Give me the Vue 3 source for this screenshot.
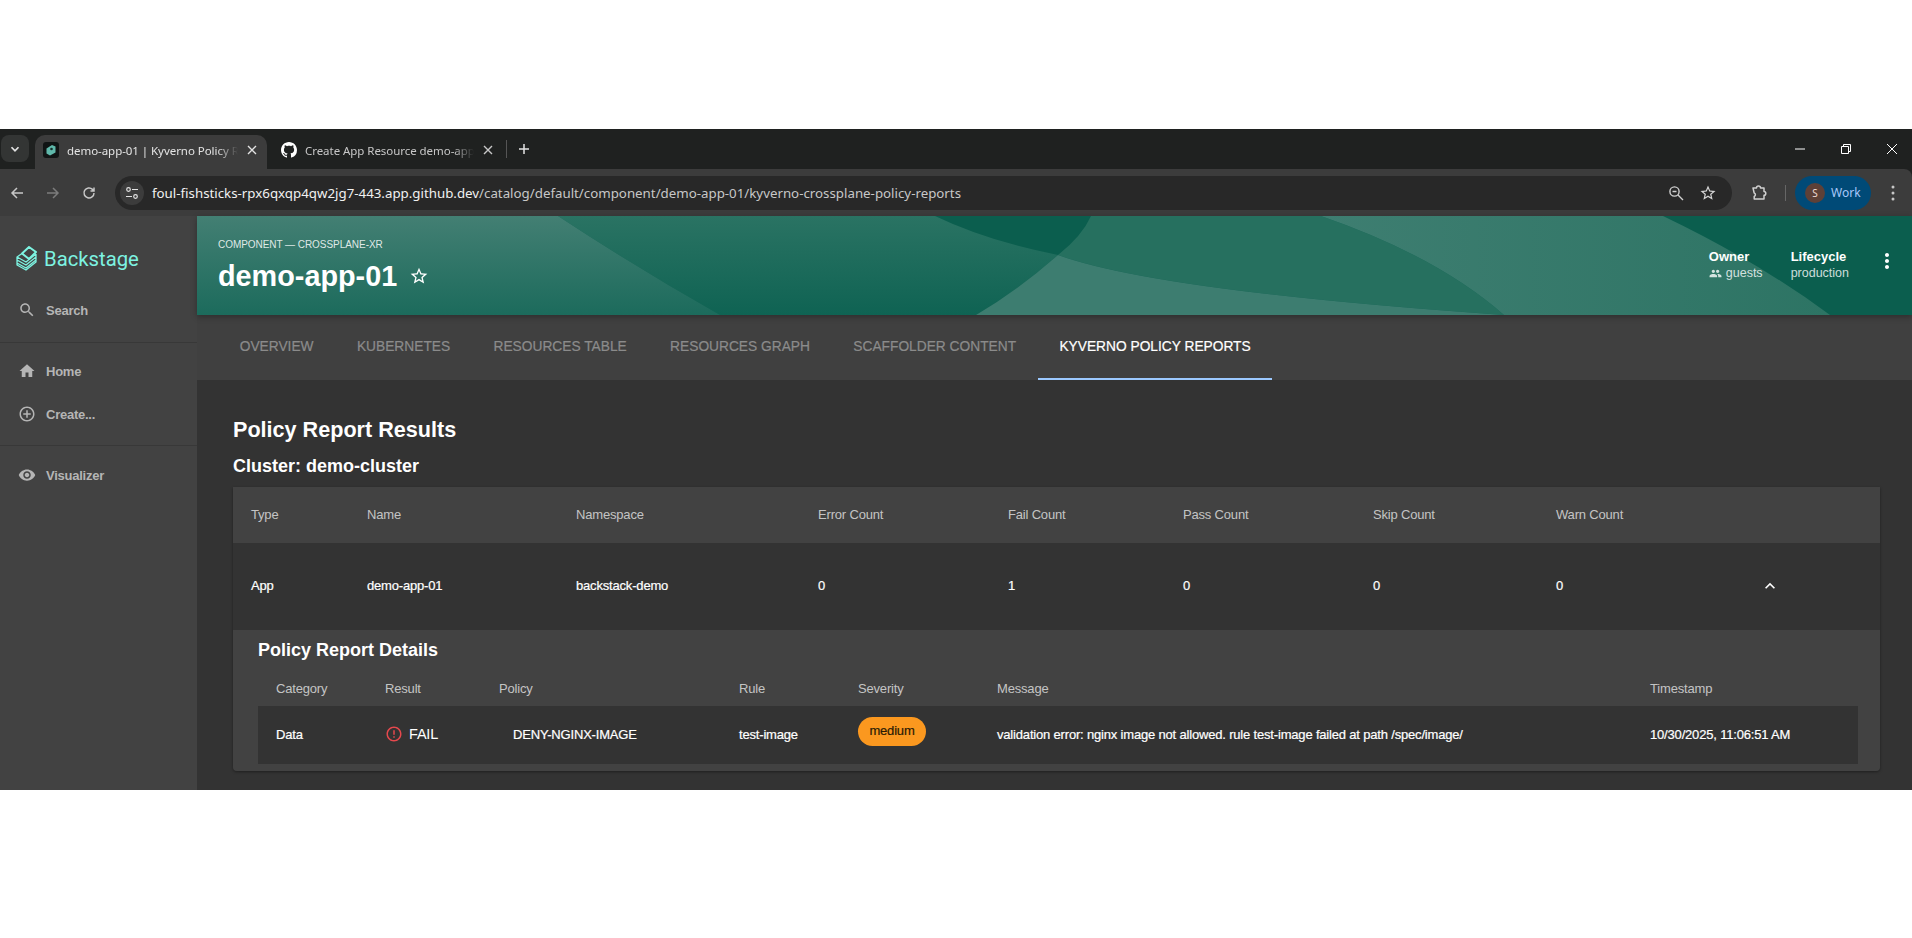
<template>
  <div class="shot">
    <div class="chrome">
      <div class="tabstrip">
        <div class="tab-search">
          <svg width="14" height="14" viewBox="0 0 24 24"><path d="M6 9l6 6 6-6" fill="none" stroke="#e3e3e3" stroke-width="3" /></svg>
        </div>
        <div class="btab active">
          <span class="favicon">
            <svg width="16" height="16" viewBox="0 0 16 16">
              <rect width="16" height="16" rx="3" fill="#101414" />
              <path d="M3.5 6.5L9 3l3.5 1.5v6L7 13.5l-3.5-2z" fill="#5fb8aa" />
              <circle cx="8.5" cy="7" r="1.3" fill="#14302c" />
            </svg>
          </span>
          <span class="btab-title">demo-app-01 | Kyverno Policy R</span>
          <svg class="btab-x" width="10" height="10" viewBox="0 0 10 10"><path d="M1 1l8 8M9 1l-8 8" stroke="#e3e3e3" stroke-width="1.4" /></svg>
        </div>
        <div class="btab">
          <svg class="gh" width="16" height="16" viewBox="0 0 16 16"><path fill="#fff" d="M8 0C3.58 0 0 3.58 0 8c0 3.54 2.29 6.53 5.47 7.59.4.07.55-.17.55-.38 0-.19-.01-.82-.01-1.49-2.01.37-2.53-.49-2.69-.94-.09-.23-.48-.94-.82-1.13-.28-.15-.68-.52-.01-.53.63-.01 1.08.58 1.23.82.72 1.21 1.87.87 2.33.66.07-.52.28-.87.51-1.07-1.78-.2-3.64-.89-3.64-3.95 0-.87.31-1.59.82-2.15-.08-.2-.36-1.02.08-2.12 0 0 .67-.21 2.2.82.64-.18 1.32-.27 2-.27s1.36.09 2 .27c1.53-1.04 2.2-.82 2.2-.82.44 1.1.16 1.92.08 2.12.51.56.82 1.27.82 2.15 0 3.07-1.87 3.75-3.65 3.95.29.25.54.73.54 1.48 0 1.07-.01 1.93-.01 2.2 0 .21.15.46.55.38A8.01 8.01 0 0 0 16 8c0-4.42-3.58-8-8-8z" /></svg>
          <span class="btab-title">Create App Resource demo-app</span>
          <svg class="btab-x" width="10" height="10" viewBox="0 0 10 10"><path d="M1 1l8 8M9 1l-8 8" stroke="#c7c7c7" stroke-width="1.4" /></svg>
        </div>
        <span class="tab-sep"></span>
        <svg class="tab-plus" width="12" height="12" viewBox="0 0 12 12"><path d="M6 1v10M1 6h10" stroke="#e3e3e3" stroke-width="1.5" /></svg>
        <div class="win-btns">
          <svg width="10" height="10" viewBox="0 0 10 10"><path d="M0 5h10" stroke="#fff" stroke-width="1" /></svg>
          <svg width="10" height="10" viewBox="0 0 10 10"><path d="M.5 2.5h7v7h-7zM2.5 2.5V.5h7v7h-2" fill="none" stroke="#fff" stroke-width="1" /></svg>
          <svg width="10" height="10" viewBox="0 0 10 10"><path d="M0 0l10 10M10 0L0 10" stroke="#fff" stroke-width="1" /></svg>
        </div>
      </div>

      <div class="toolbar">
        <div class="nav-btns">
          <svg width="16" height="16" viewBox="0 0 16 16"><path d="M14 8H3M8 3L3 8l5 5" fill="none" stroke="#c7c7c7" stroke-width="1.5" /></svg>
          <svg width="16" height="16" viewBox="0 0 16 16"><path d="M2 8h11M8 3l5 5-5 5" fill="none" stroke="#7c7c7c" stroke-width="1.5" /></svg>
          <svg width="16" height="16" viewBox="0 0 16 16"><path d="M13 8a5 5 0 1 1-1.5-3.6L13 6M13 2.5V6H9.5" fill="none" stroke="#c7c7c7" stroke-width="1.5" /></svg>
        </div>
        <div class="omnibox">
          <span class="tune">
            <svg width="14" height="14" viewBox="0 0 14 14">
              <circle cx="3.5" cy="3.5" r="1.8" fill="none" stroke="#e3e3e3" stroke-width="1.2" />
              <path d="M7 3.5h6M1 10.5h6" stroke="#e3e3e3" stroke-width="1.2" />
              <circle cx="10.5" cy="10.5" r="1.8" fill="none" stroke="#e3e3e3" stroke-width="1.2" />
            </svg>
          </span>
          <span class="url"><b>foul-fishsticks-rpx6qxqp4qw2jg7-443.app.github.dev</b>/catalog/default/component/demo-app-01/kyverno-crossplane-policy-reports</span>
          <svg class="omni-zoom" width="16" height="16" viewBox="0 0 16 16">
            <circle cx="6.5" cy="6.5" r="4.6" fill="none" stroke="#d0d0d0" stroke-width="1.4" />
            <path d="M10 10l5 5M4.5 6.5h4" stroke="#d0d0d0" stroke-width="1.4" />
          </svg>
          <svg class="omni-star" width="18" height="18" viewBox="0 0 24 24"><path fill="#d6d6d6" :d="starPath" /></svg>
        </div>
        <svg class="puzzle" width="18" height="18" viewBox="0 0 18 18"><path d="M3 4h3.5a2 2 0 0 1 4 0H14v3.6a1.8 1.8 0 0 1 0 3.6V15H4.2v-2.6a1.8 1.8 0 0 0 0-3.4z" fill="none" stroke="#d0d0d0" stroke-width="1.5" stroke-linejoin="round" /></svg>
        <span class="bar-sep"></span>
        <div class="profile">
          <span class="avatar">S</span>
          <span>Work</span>
        </div>
        <svg class="chrome-menu" width="4" height="16" viewBox="0 0 4 16"><circle cx="2" cy="2" r="1.5" fill="#c7c7c7" /><circle cx="2" cy="8" r="1.5" fill="#c7c7c7" /><circle cx="2" cy="14" r="1.5" fill="#c7c7c7" /></svg>
      </div>
    </div>

    <div class="page">
      <aside class="sidebar">
        <div class="logo">
          <svg width="22" height="26" viewBox="0 0 22 26" fill="none" stroke="#7df3e1" stroke-width="1.3" stroke-linejoin="round">
            <path d="M6 7.5L13 1l7 5-7 7z" stroke-width="2" />
            <path d="M6 7.5L1 11l9 5 10-8M1 11v3l9 5 10-8V8M1 14v3l9 5 10-8v-3M1 17v2l9 5 10-8v-2" />
          </svg>
          <span>Backstage</span>
        </div>
        <div class="side-item search">
          <svg width="18" height="18" viewBox="0 0 24 24"><path :d="icons.search" /></svg>
          <span>Search</span>
        </div>
        <div class="side-rule"></div>
        <div class="side-item home">
          <svg width="18" height="18" viewBox="0 0 24 24"><path :d="icons.home" /></svg>
          <span>Home</span>
        </div>
        <div class="side-item create">
          <svg width="18" height="18" viewBox="0 0 24 24"><path :d="icons.add" /></svg>
          <span>Create...</span>
        </div>
        <div class="side-rule second"></div>
        <div class="side-item visual">
          <svg width="18" height="18" viewBox="0 0 24 24"><path :d="icons.eye" /></svg>
          <span>Visualizer</span>
        </div>
      </aside>

      <main class="main">
        <header class="hero">
          <svg class="waves" viewBox="0 0 1715 99" preserveAspectRatio="none">
            <defs>
              <linearGradient id="leftFade" x1="0" y1="0" x2="0" y2="1">
                <stop offset="0" stop-color="#437f73" />
                <stop offset="1" stop-color="#1c6b5c" />
              </linearGradient>
              <linearGradient id="midFade" x1="0" y1="0" x2="0" y2="1">
                <stop offset="0" stop-color="#2a7363" />
                <stop offset="1" stop-color="#0f6353" />
              </linearGradient>
              <linearGradient id="rightFade" x1="0" y1="0" x2="1" y2="0">
                <stop offset="0" stop-color="#3e7e71" />
                <stop offset="1" stop-color="#2d7464" />
              </linearGradient>
            </defs>
            <rect width="1715" height="99" fill="#0b5e4e" />
            <path d="M361 0H738Q790 25 861 39Q820 75 779 99H523Q440 52 361 0Z" fill="url(#midFade)" />
            <path d="M0 0H361Q440 52 523 99H0Z" fill="url(#leftFade)" />
            <path d="M894 0H1124Q1240 40 1307 99Q960 75 861 39Q885 20 894 0Z" fill="#26705f" />
            <path d="M861 39Q960 75 1307 99H779Q820 75 861 39Z" fill="#3d7d70" />
            <path d="M1124 0H1466Q1560 45 1633 99H1307Q1240 40 1124 0Z" fill="url(#rightFade)" />
          </svg>
          <div class="hero-title">
            <div class="kicker">COMPONENT — CROSSPLANE-XR</div>
            <div class="title-line">
              <h1>demo-app-01</h1>
              <svg width="20" height="20" viewBox="0 0 24 24"><path fill="#fff" :d="starPath" /></svg>
            </div>
          </div>
          <div class="hero-meta">
            <div class="meta">
              <strong>Owner</strong>
              <span class="meta-val">
                <svg width="13" height="13" viewBox="0 0 24 24"><path :d="icons.group" /></svg>
                guests
              </span>
            </div>
            <div class="meta">
              <strong>Lifecycle</strong>
              <span class="meta-val">production</span>
            </div>
            <svg class="hero-more" width="24" height="24" viewBox="0 0 24 24"><path fill="#fff" :d="icons.more" /></svg>
          </div>
        </header>

        <nav class="tabs">
          <span v-for="t in tabs" :key="t" class="tab" :class="{ current: t === activeTab }">{{ t }}</span>
        </nav>

        <section class="content">
          <h2>Policy Report Results</h2>
          <h3>Cluster: demo-cluster</h3>
          <div class="card">
            <div class="report-grid report-head">
              <span v-for="c in reportCols" :key="c">{{ c }}</span>
            </div>
            <div class="report-grid report-row">
              <span v-for="(v, i) in reportRow" :key="i">{{ v }}</span>
              <svg class="chev" width="20" height="20" viewBox="0 0 24 24"><path fill="#fff" :d="icons.less" /></svg>
            </div>
            <div class="details">
              <h4>Policy Report Details</h4>
              <div class="detail-grid detail-head">
                <span v-for="c in detailCols" :key="c">{{ c }}</span>
              </div>
              <div class="detail-grid detail-row">
                <span>Data</span>
                <span class="result">
                  <svg width="18" height="18" viewBox="0 0 24 24"><path fill="#e5484d" :d="icons.error" /></svg>
                  FAIL
                </span>
                <span class="policy">DENY-NGINX-IMAGE</span>
                <span>test-image</span>
                <span class="sev"><em>medium</em></span>
                <span>validation error: nginx image not allowed. rule test-image failed at path /spec/image/</span>
                <span>10/30/2025, 11:06:51 AM</span>
              </div>
            </div>
          </div>
        </section>
      </main>
    </div>
  </div>
</template>

<script setup>
const starPath = 'M22 9.24l-7.19-.62L12 2 9.19 8.63 2 9.24l5.46 4.73L5.82 21 12 17.27 18.18 21l-1.63-7.03L22 9.24zM12 15.4l-3.76 2.27 1-4.28-3.32-2.88 4.38-.38L12 6.1l1.71 4.04 4.38.38-3.32 2.88 1 4.28L12 15.4z'

const icons = {
  search: 'M15.5 14h-.79l-.28-.27C15.41 12.59 16 11.11 16 9.5 16 5.91 13.09 3 9.5 3S3 5.91 3 9.5 5.91 16 9.5 16c1.61 0 3.09-.59 4.23-1.57l.27.28v.79l5 4.99L20.49 19l-4.99-5zm-6 0C7.01 14 5 11.99 5 9.5S7.01 5 9.5 5 14 7.01 14 9.5 11.99 14 9.5 14z',
  home: 'M10 20v-6h4v6h5v-8h3L12 3 2 12h3v8z',
  add: 'M13 7h-2v4H7v2h4v4h2v-4h4v-2h-4V7zm-1-5C6.48 2 2 6.48 2 12s4.48 10 10 10 10-4.48 10-10S17.52 2 12 2zm0 18c-4.41 0-8-3.59-8-8s3.59-8 8-8 8 3.59 8 8-3.59 8-8 8z',
  eye: 'M12 4.5C7 4.5 2.73 7.61 1 12c1.73 4.39 6 7.5 11 7.5s9.27-3.11 11-7.5c-1.73-4.39-6-7.5-11-7.5zM12 17c-2.76 0-5-2.24-5-5s2.24-5 5-5 5 2.24 5 5-2.24 5-5 5zm0-8c-1.66 0-3 1.34-3 3s1.34 3 3 3 3-1.34 3-3-1.34-3-3-3z',
  group: 'M16 11c1.66 0 2.99-1.34 2.99-3S17.66 5 16 5c-1.66 0-3 1.34-3 3s1.34 3 3 3zm-8 0c1.66 0 2.99-1.34 2.99-3S9.66 5 8 5C6.34 5 5 6.34 5 8s1.34 3 3 3zm0 2c-2.33 0-7 1.17-7 3.5V19h14v-2.5c0-2.33-4.67-3.5-7-3.5zm8 0c-.29 0-.62.02-.97.05 1.16.84 1.97 1.97 1.97 3.45V19h6v-2.5c0-2.33-4.67-3.5-7-3.5z',
  more: 'M12 8c1.1 0 2-.9 2-2s-.9-2-2-2-2 .9-2 2 .9 2 2 2zm0 2c-1.1 0-2 .9-2 2s.9 2 2 2 2-.9 2-2-.9-2-2-2zm0 6c-1.1 0-2 .9-2 2s.9 2 2 2 2-.9 2-2-.9-2-2-2z',
  less: 'M12 8l-6 6 1.41 1.41L12 10.83l4.59 4.58L18 14z',
  error: 'M11 15h2v2h-2zm0-8h2v6h-2zm.99-5C6.47 2 2 6.48 2 12s4.47 10 9.99 10C17.52 22 22 17.52 22 12S17.52 2 11.99 2zM12 20c-4.42 0-8-3.58-8-8s3.58-8 8-8 8 3.58 8 8-3.58 8-8 8z'
}

const tabs = ['Overview', 'Kubernetes', 'Resources Table', 'Resources Graph', 'Scaffolder Content', 'Kyverno Policy Reports']
const activeTab = 'Kyverno Policy Reports'

const reportCols = ['Type', 'Name', 'Namespace', 'Error Count', 'Fail Count', 'Pass Count', 'Skip Count', 'Warn Count']
const reportRow = ['App', 'demo-app-01', 'backstack-demo', '0', '1', '0', '0', '0']
const detailCols = ['Category', 'Result', 'Policy', 'Rule', 'Severity', 'Message', 'Timestamp']
</script>

<style>
html, body {
  margin: 0;
  background: #fff;
}
</style>

<style scoped>
.shot {
  width: 1912px;
  height: 938px;
  padding-top: 129px;
  box-sizing: border-box;
  background: #fff;
  overflow: hidden;
  font-family: "Liberation Sans", Arial, sans-serif;
}

/* browser chrome */
.chrome {
  background: #1f2120;
}
.tabstrip {
  height: 40px;
  display: flex;
  align-items: flex-end;
  font-family: "Noto Sans", sans-serif;
  font-size: 11.5px;
  letter-spacing: -.05px;
  color: #e3e3e3;
}
.tab-search {
  width: 28px;
  height: 27px;
  margin: 0 6px 7px 1px;
  border-radius: 8px;
  background: #333534;
  display: flex;
  align-items: center;
  justify-content: center;
}
.btab {
  width: 232px;
  height: 34px;
  display: flex;
  align-items: center;
  padding: 0 10px 4px 8px;
  box-sizing: border-box;
  border-radius: 10px 10px 0 0;
  color: #c7c7c7;
}
.btab.active {
  background: #3c3c3c;
  color: #e3e3e3;
}
.btab + .btab {
  margin-left: 6px;
  width: 230px;
}
.favicon {
  display: flex;
  margin-right: 8px;
}
.gh {
  margin-right: 8px;
  flex: none;
}
.btab-title {
  flex: 1;
  white-space: nowrap;
  overflow: hidden;
  -webkit-mask-image: linear-gradient(to right, #000 88%, transparent 100%);
  mask-image: linear-gradient(to right, #000 88%, transparent 100%);
}
.btab-x {
  margin-left: 9px;
  flex: none;
}
.tab-sep {
  width: 1px;
  height: 18px;
  background: #555;
  margin: 0 0 11px 3px;
}
.tab-plus {
  margin: 0 0 14px 11px;
}
.win-btns {
  margin-left: auto;
  display: flex;
  gap: 36px;
  padding-right: 15px;
  margin-bottom: 15px;
}

.toolbar {
  height: 47px;
  background: #3c3c3c;
  display: flex;
  align-items: center;
  font-family: "Noto Sans", sans-serif;
  border-radius: 0 8px 0 0;
}
.nav-btns {
  width: 115px;
  padding-left: 9px;
  box-sizing: border-box;
  display: flex;
  gap: 20px;
}
.omnibox {
  width: 1617px;
  height: 34px;
  border-radius: 17px;
  background: #282828;
  display: flex;
  align-items: center;
  padding-left: 5px;
  box-sizing: border-box;
}
.tune {
  width: 24px;
  height: 24px;
  border-radius: 50%;
  background: #3c3c3c;
  display: flex;
  align-items: center;
  justify-content: center;
  margin-right: 8px;
}
.url {
  font-size: 13.3px;
  color: #c7c7c7;
  white-space: nowrap;
}
.url b {
  font-weight: 400;
  color: #f1f1f1;
}
.omni-zoom {
  margin-left: auto;
}
.omni-star {
  margin: 0 15px 0 15px;
}
.puzzle {
  margin-left: 18px;
}
.bar-sep {
  width: 1px;
  height: 16px;
  background: #666;
  margin-left: 17px;
}
.profile {
  width: 76px;
  height: 34px;
  margin-left: 9px;
  border-radius: 17px;
  background: #004a77;
  color: #a8c7fa;
  font-size: 12px;
  display: flex;
  align-items: center;
  gap: 6px;
  padding-left: 10px;
  box-sizing: border-box;
}
.avatar {
  width: 20px;
  height: 20px;
  border-radius: 50%;
  background: #5d4037;
  color: #f0dcd5;
  font-size: 10px;
  display: flex;
  align-items: center;
  justify-content: center;
}
.chrome-menu {
  margin-left: 20px;
}

/* app */
.page {
  height: 574px;
  display: flex;
  background: #333;
}
.sidebar {
  width: 197px;
  flex: none;
  background: #424242;
  color: #b5b5b5;
  font-size: 13px;
  font-weight: 700;
  letter-spacing: -.25px;
}
.sidebar svg {
  fill: #b5b5b5;
  flex: none;
}
.logo {
  display: flex;
  align-items: center;
  gap: 6px;
  padding: 28px 0 0 16px;
  height: 29px;
  font-family: Roboto, sans-serif;
  font-size: 20.3px;
  font-weight: 400;
  letter-spacing: 0;
  color: #7df3e1;
}
.logo svg {
  fill: none;
}
.side-item {
  display: flex;
  align-items: center;
  gap: 10px;
  padding-left: 18px;
  height: 20px;
}
.side-item.search {
  margin-top: 27px;
}
.side-rule {
  height: 1px;
  background: #383838;
  margin-top: 22px;
}
.side-item.home {
  margin-top: 18px;
}
.side-item.create {
  margin-top: 23px;
}
.side-rule.second {
  margin-top: 21px;
}
.side-item.visual {
  margin-top: 19px;
}

.main {
  flex: 1;
  min-width: 0;
}
.hero {
  position: relative;
  height: 99px;
  display: flex;
  justify-content: space-between;
  color: #fff;
  box-shadow: 0 2px 6px rgba(0, 0, 0, .3);
  z-index: 1;
}
.waves {
  position: absolute;
  inset: 0;
  width: 100%;
  height: 100%;
}
.hero-title, .hero-meta {
  position: relative;
}
.hero-title {
  padding: 23px 0 0 21px;
}
.kicker {
  font-size: 10px;
  line-height: 12px;
  letter-spacing: -.05px;
  color: rgba(255, 255, 255, .85);
}
.title-line {
  display: flex;
  align-items: center;
  gap: 12px;
  margin-top: 8px;
}
h1 {
  margin: 0;
  font-size: 28.8px;
  line-height: 34px;
  font-weight: 700;
}
.hero-meta {
  display: flex;
  align-items: flex-start;
  padding-top: 33px;
}
.meta {
  display: flex;
  flex-direction: column;
  font-size: 13px;
  line-height: 16px;
  margin-right: 28px;
}
.meta-val {
  font-size: 12.5px;
  color: rgba(255, 255, 255, .8);
  display: flex;
  align-items: center;
  gap: 4px;
}
.meta-val svg {
  fill: rgba(255, 255, 255, .8);
}
.hero-more {
  margin: 0 13px 0 -2px;
}

.tabs {
  height: 65px;
  background: #404040;
  display: flex;
  padding-left: 21px;
  box-sizing: border-box;
}
.tab {
  padding: 0 21.7px;
  font-size: 13.75px;
  line-height: 63px;
  text-transform: uppercase;
  color: #8b8b8b;
  -webkit-text-stroke: .2px currentColor;
  border-bottom: 2px solid transparent;
}
.tab.current {
  color: #fff;
  border-bottom-color: #9cc9ff;
}

.content {
  padding: 37px 32px 0 36px;
  color: #fff;
}
h2 {
  margin: 0;
  font-size: 21.6px;
  line-height: 26px;
}
h3 {
  margin: 12px 0 0;
  font-size: 18px;
  line-height: 22px;
}
.card {
  margin-top: 10px;
  background: #333;
  border-radius: 0 0 4px 4px;
  box-shadow: 0 1px 3px rgba(0, 0, 0, .4);
  font-size: 13px;
  letter-spacing: -.18px;
}
.report-grid {
  display: grid;
  grid-template-columns: 116px 209px 242px 190px 175px 190px 183px 206px 1fr;
  padding-left: 18px;
  align-items: center;
}
.report-head {
  height: 56px;
  padding-bottom: 1px;
  box-sizing: border-box;
  background: #424242;
  color: rgba(255, 255, 255, .7);
}
.report-row {
  height: 87px;
  padding-bottom: 2px;
  box-sizing: border-box;
  background: #333;
  -webkit-text-stroke: .2px currentColor;
}
.chev {
  margin-left: -2px;
}
.details {
  background: #424242;
  height: 141px;
  padding: 9px 22px 0 25px;
  box-sizing: border-box;
  border-radius: 0 0 4px 4px;
}
h4 {
  margin: 0;
  font-size: 18px;
  line-height: 22px;
  letter-spacing: 0;
}
.detail-grid {
  display: grid;
  grid-template-columns: 109px 114px 240px 119px 139px 653px 1fr;
  padding-left: 18px;
  align-items: center;
}
.detail-head {
  height: 45px;
  padding-top: 9px;
  box-sizing: border-box;
  color: rgba(255, 255, 255, .7);
}
.detail-row {
  height: 58px;
  padding-bottom: 2px;
  box-sizing: border-box;
  background: #333;
  -webkit-text-stroke: .2px currentColor;
}
.result {
  display: flex;
  align-items: center;
  gap: 6px;
  font-size: 14.5px;
  -webkit-text-stroke: 0;
}
.policy {
  padding-left: 14px;
}
.sev {
  display: flex;
  margin-top: -5px;
}
.sev em {
  width: 68px;
  height: 29px;
  line-height: 27px;
  border-radius: 15px;
  background: #fb981f;
  color: #2a1b05;
  text-align: center;
  font-style: normal;
}
</style>
